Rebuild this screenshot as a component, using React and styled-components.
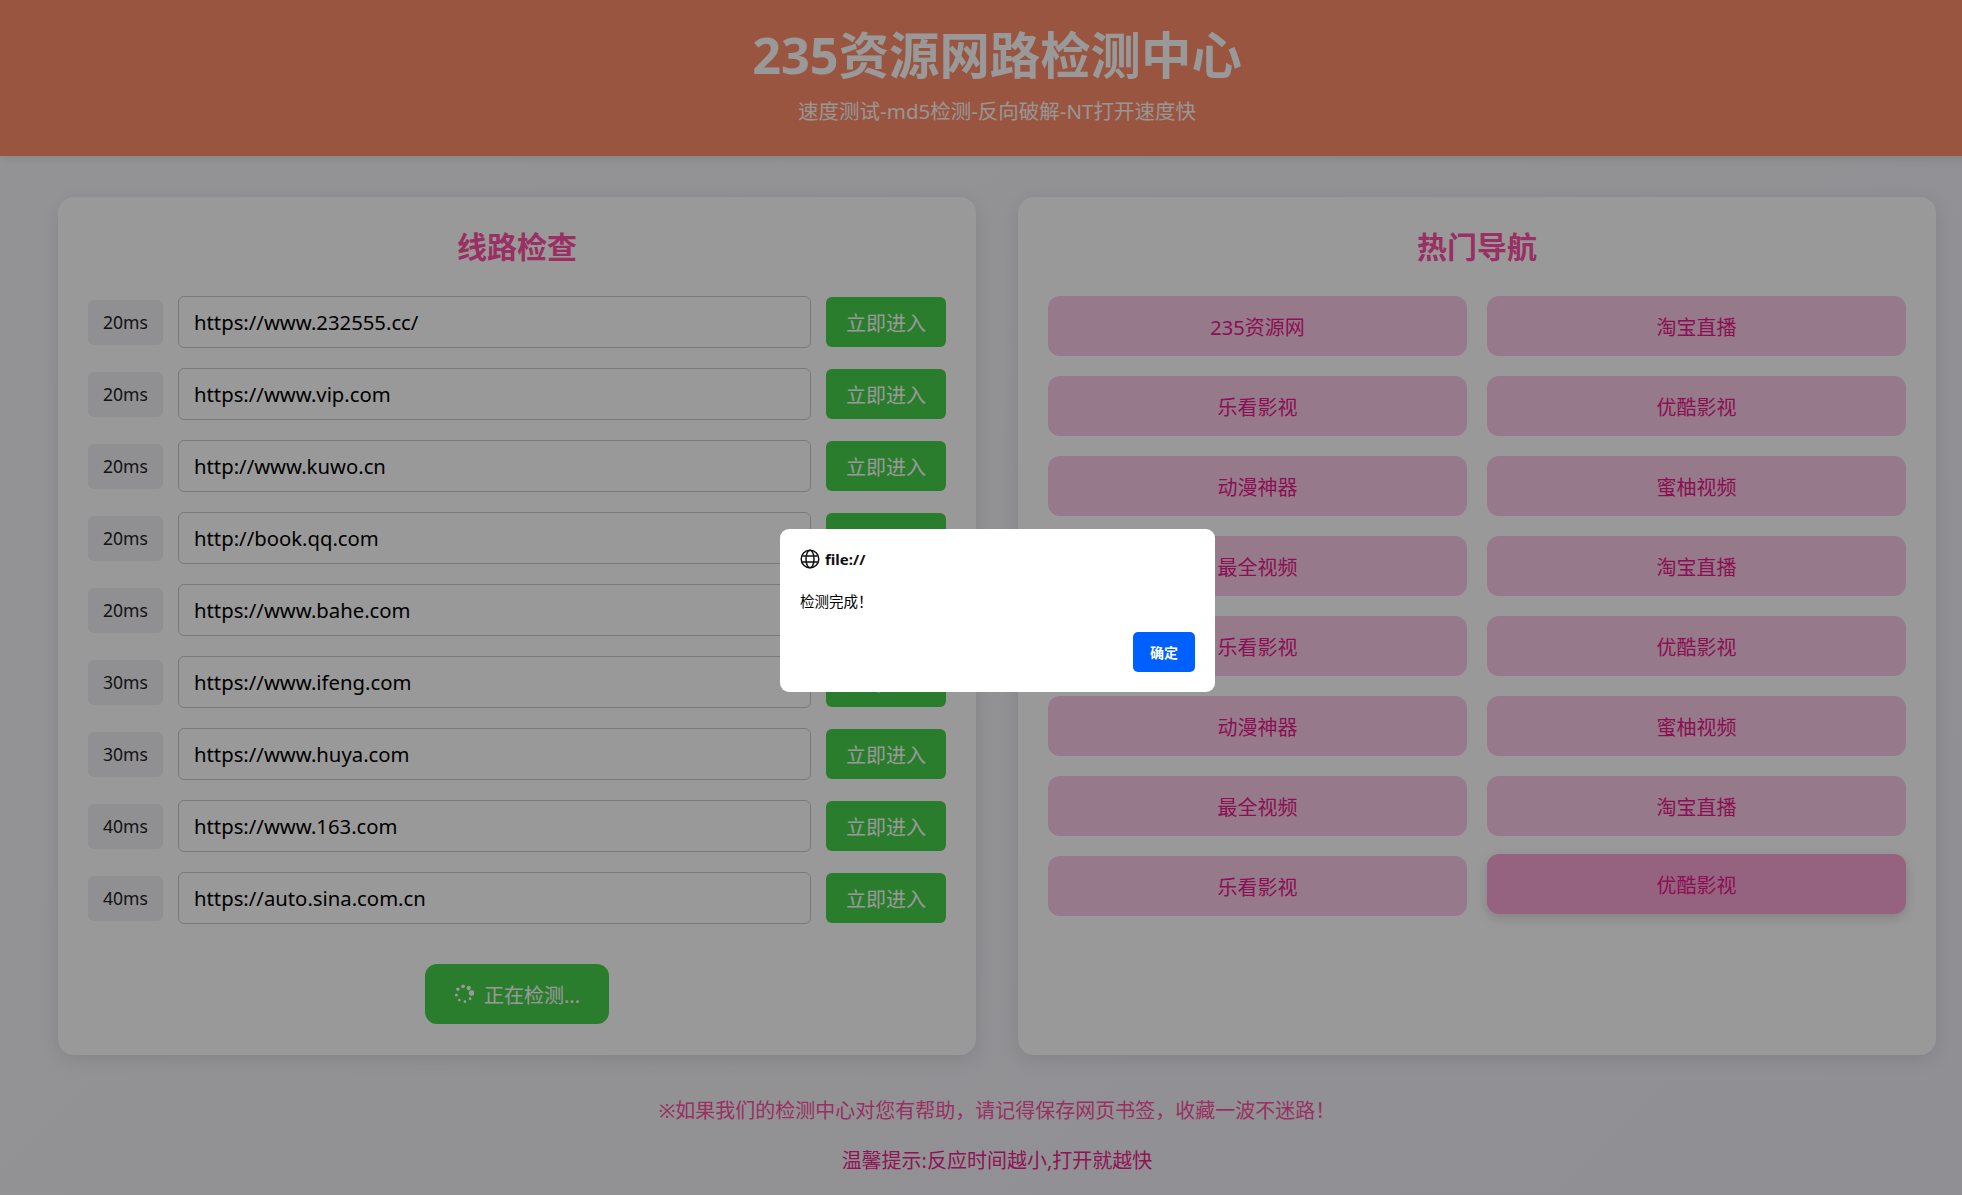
import React from 'react';
import styled, {createGlobalStyle} from 'styled-components';

const GlobalStyle = createGlobalStyle`
  html, body {
    margin: 0;
    padding: 0;
    overflow: hidden;
    height: 1195px;
  }
  * {
    box-sizing: border-box;
  }
  body {
    font-family: "Noto Sans", "Noto Sans CJK SC", sans-serif;
  }
`;

const Page = styled.div`
  position: relative;
  width: 1994px;
  height: 1195px;
  overflow: hidden;
  background: linear-gradient(135deg, #f7f7fb, #f0f0f7);
`;

const Header = styled.header`
  height: 156px;
  padding-top: 23px;
  background: #ff8e6b;
  text-align: center;
  box-shadow: 0 2px 10px rgba(0, 0, 0, .1);
`;

const Title = styled.h1`
  margin: 0 0 9px;
  font-size: 50.4px;
  line-height: 64px;
  font-weight: 700;
  color: #fff;
`;

const Subtitle = styled.p`
  margin: 0;
  font-size: 20.5px;
  line-height: 30px;
  color: #fff;
  opacity: .95;
`;

const Columns = styled.main`
  display: grid;
  grid-template-columns: 1fr 1fr;
  gap: 42px;
  padding: 41px 58px 0;
`;

const Panel = styled.section`
  height: 858px;
  padding: 30px;
  background: #fff;
  border-radius: 16px;
  box-shadow: 0 4px 20px rgba(0, 0, 0, .1);
`;

const PanelTitle = styled.h2`
  margin: 0 0 29px;
  font-size: 30px;
  line-height: 40px;
  font-weight: 700;
  text-align: center;
  color: #ff4fa3;
`;

const Row = styled.div`
  display: flex;
  align-items: center;
  gap: 15px;
  margin-bottom: 20px;
`;

const Time = styled.span`
  flex: none;
  width: 75px;
  height: 45px;
  display: flex;
  align-items: center;
  justify-content: center;
  background: #f0f0f5;
  border-radius: 6px;
  font-size: 17.6px;
  color: #222;
`;

const UrlField = styled.input`
  flex: 1;
  min-width: 0;
  height: 52px;
  padding: 0 15px;
  border: 1px solid #ccc;
  border-radius: 6px;
  background: transparent;
  font: 20.3px "Noto Sans", "Noto Sans CJK SC", sans-serif;
  color: #000;
  outline: none;
`;

const EnterButton = styled.button`
  flex: none;
  width: 120px;
  height: 50px;
  border: none;
  border-radius: 6px;
  background: #46d14b;
  font: 20px "Noto Sans", "Noto Sans CJK SC", sans-serif;
  color: #fff;
`;

const CheckWrap = styled.div`
  display: flex;
  justify-content: center;
  margin-top: 40px;
`;

const CheckButton = styled.button`
  width: 184px;
  height: 60px;
  display: flex;
  align-items: center;
  justify-content: center;
  gap: 10px;
  border: none;
  border-radius: 12px;
  background: #46d14b;
  font: 20px "Noto Sans", "Noto Sans CJK SC", sans-serif;
  color: #fff;
`;

const NavGrid = styled.div`
  display: grid;
  grid-template-columns: 1fr 1fr;
  gap: 20px;
`;

const NavItem = styled.a`
  height: 60px;
  display: flex;
  align-items: center;
  justify-content: center;
  border-radius: 12px;
  background: ${props => props.$active ? '#f8a6d6' : '#fbcbe8'};
  font-size: 20px;
  color: #e8198b;
  transform: ${props => props.$active ? 'translateY(-2px)' : 'none'};
  box-shadow: ${props => props.$active ? '0 4px 12px rgba(0, 0, 0, .15)' : 'none'};
`;

const Footer = styled.footer`
  padding-top: 41px;
  text-align: center;
  font-size: 20px;
`;

const FooterLine = styled.p`
  margin: 0 0 20px;
  line-height: 30px;
  color: ${props => props.$strong ? '#f0208f' : '#ff4fa3'};
`;

const Overlay = styled.div`
  position: absolute;
  inset: 0;
  z-index: 10;
  background: rgba(0, 0, 0, .4);
`;

const Dialog = styled.div`
  position: absolute;
  left: 780px;
  top: 529px;
  width: 435px;
  height: 163px;
  display: flex;
  flex-direction: column;
  padding: 20px;
  background: #fff;
  border-radius: 9px;
  color: #000;
`;

const DialogHead = styled.div`
  display: flex;
  align-items: center;
  gap: 5px;
  height: 20px;
  font-size: 15px;
  font-weight: 700;
  color: #111;
`;

const DialogText = styled.p`
  margin: 22px 0 0;
  font-size: 14.5px;
  line-height: 20px;
`;

const DialogActions = styled.div`
  display: flex;
  justify-content: flex-end;
  margin-top: auto;
`;

const OkButton = styled.button`
  width: 62px;
  height: 40px;
  border: none;
  border-radius: 5px;
  background: #0060ff;
  font: 700 14px "Noto Sans", "Noto Sans CJK SC", sans-serif;
  color: #fff;
`;

const lines = [
  ['20ms', 'https://www.232555.cc/'],
  ['20ms', 'https://www.vip.com'],
  ['20ms', 'http://www.kuwo.cn'],
  ['20ms', 'http://book.qq.com'],
  ['20ms', 'https://www.bahe.com'],
  ['30ms', 'https://www.ifeng.com'],
  ['30ms', 'https://www.huya.com'],
  ['40ms', 'https://www.163.com'],
  ['40ms', 'https://auto.sina.com.cn'],
];

const navs = [
  '235资源网', '淘宝直播',
  '乐看影视', '优酷影视',
  '动漫神器', '蜜柚视频',
  '最全视频', '淘宝直播',
  '乐看影视', '优酷影视',
  '动漫神器', '蜜柚视频',
  '最全视频', '淘宝直播',
  '乐看影视', '优酷影视',
];

// dot radii going counter-clockwise from the big one on the right
const spinnerDots = [2.8, 2.2, 1.9, 1.7, 1.5, 1.4, 1.4, 1.4];

const Spinner = () => (
  <svg width="20" height="20" viewBox="0 0 20 20" fill="#fff">
    {spinnerDots.map((r, i) => {
      const a = (-7 - i * 45) * Math.PI / 180;
      return <circle key={i} cx={10 + 7.7 * Math.cos(a)} cy={10 + 7.7 * Math.sin(a)} r={r}/>;
    })}
  </svg>
);

const GlobeIcon = () => (
  <svg width="20" height="20" viewBox="0 0 20 20" fill="none" stroke="#111" strokeWidth="1.5">
    <circle cx="10" cy="10" r="8.8"/>
    <ellipse cx="10" cy="10" rx="4" ry="8.8"/>
    <path d="M2.2 7h15.6M2.2 13h15.6"/>
  </svg>
);

const App = () => {
  return (
    <Page>
      <GlobalStyle/>
      <Header>
        <Title>235资源网路检测中心</Title>
        <Subtitle>速度测试-md5检测-反向破解-NT打开速度快</Subtitle>
      </Header>
      <Columns>
        <Panel>
          <PanelTitle>线路检查</PanelTitle>
          {lines.map(([time, url]) => (
            <Row key={url}>
              <Time>{time}</Time>
              <UrlField readOnly value={url}/>
              <EnterButton>立即进入</EnterButton>
            </Row>
          ))}
          <CheckWrap>
            <CheckButton><Spinner/>正在检测...</CheckButton>
          </CheckWrap>
        </Panel>
        <Panel>
          <PanelTitle>热门导航</PanelTitle>
          <NavGrid>
            {navs.map((name, i) => (
              <NavItem key={i} $active={i === navs.length - 1}>{name}</NavItem>
            ))}
          </NavGrid>
        </Panel>
      </Columns>
      <Footer>
        <FooterLine>※如果我们的检测中心对您有帮助，请记得保存网页书签，收藏一波不迷路！</FooterLine>
        <FooterLine $strong>温馨提示:反应时间越小,打开就越快</FooterLine>
      </Footer>
      <Overlay>
        <Dialog>
          <DialogHead><GlobeIcon/>file://</DialogHead>
          <DialogText>检测完成！</DialogText>
          <DialogActions><OkButton>确定</OkButton></DialogActions>
        </Dialog>
      </Overlay>
    </Page>
  );
};

export default App;
